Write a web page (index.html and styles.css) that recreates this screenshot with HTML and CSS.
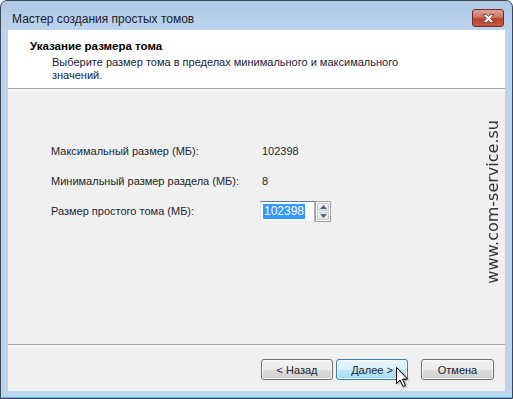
FILE: index.html
```html
<!DOCTYPE html>
<html lang="ru">
<head>
    <meta charset="UTF-8">
    <title>Мастер создания простых томов</title>
    <link rel="stylesheet" href="styles.css">
</head>
<body>
    <div class="window">
        <div class="titlebar">
            <span class="title">Мастер создания простых томов</span>
            <span class="close">
                <svg width="15" height="11" viewBox="0 0 15 11">
                    <path d="M2 1.5 L5.5 1.5 L7.5 3.5 L9.5 1.5 L13 1.5 L9.5 5.5 L13 9.5 L9.5 9.5 L7.5 7.5 L5.5 9.5 L2 9.5 L5.5 5.5 Z" fill="#fff" stroke="#7a4a4a" stroke-width="1"/>
                </svg>
            </span>
        </div>
        <div class="client">
            <div class="header">
                <div class="heading">Указание размера тома</div>
                <div class="subtitle">Выберите размер тома в пределах минимального и максимального<br>значений.</div>
            </div>
            <div class="content">
                <div class="row">
                    <span class="label">Максимальный размер (МБ):</span>
                    <span class="value">102398</span>
                </div>
                <div class="row">
                    <span class="label">Минимальный размер раздела (МБ):</span>
                    <span class="value">8</span>
                </div>
                <div class="row">
                    <span class="label">Размер простого тома (МБ):</span>
                    <div class="spinner">
                        <div class="spin-field"><span class="selected">102398</span></div>
                        <div class="spin-buttons">
                            <span class="spin">
                                <svg width="7" height="4" viewBox="0 0 7 4"><path d="M3.5 0 L7 4 L0 4 Z" fill="#4d6185"/></svg>
                            </span>
                            <span class="spin">
                                <svg width="7" height="4" viewBox="0 0 7 4"><path d="M0 0 L7 0 L3.5 4 Z" fill="#4d6185"/></svg>
                            </span>
                        </div>
                    </div>
                </div>
            </div>
            <div class="footer">
                <span class="btn">&lt; Назад</span>
                <span class="btn hot">Далее &gt;</span>
                <span class="btn cancel">Отмена</span>
            </div>
        </div>
        <div class="watermark">www.com-service.su</div>
        <svg class="cursor" width="14" height="22" viewBox="0 0 14 22">
            <path d="M1.5 1.5 L1.5 17.5 L5 14 L8 20.5 L10.5 19.5 L7.5 13 L12.5 13 Z" fill="#fff" stroke="#000" stroke-width="1" stroke-linejoin="miter"/>
        </svg>
    </div>
</body>
</html>
```

FILE: styles.css
```css
body {
    margin: 0;
    background-color: #fff;
    font-family: 'Liberation Sans', Arial, sans-serif;
    font-size: 11px;
    color: #000;
}

.window {
    position: relative;
    box-sizing: border-box;
    width: 513px;
    height: 399px;
    border: 1px solid #3a4656;
    border-radius: 7px 7px 0 0;
    background: linear-gradient(to bottom, #aec8e6 0px, #bcd4ee 30px, #bcd4ee 100%);
    box-shadow: inset 0 -1px 0 #4cc3dd;
    display: flex;
    flex-direction: column;
}

.titlebar {
    height: 29px;
    display: flex;
    align-items: flex-start;
    justify-content: space-between;
    padding: 0 8px 0 11px;
}

.title {
    margin-top: 10px;
    line-height: 16px;
    font-size: 12px;
    color: #1b1b2b;
}

.close {
    margin-top: 8px;
    width: 32px;
    height: 18px;
    box-sizing: border-box;
    border: 1px solid #6e2b2b;
    border-radius: 3px;
    background: linear-gradient(to bottom, #e0a396 0%, #cf7261 45%, #b9402c 55%, #c75a3f 100%);
    display: flex;
    align-items: center;
    justify-content: center;
}

.client {
    margin: 0 7px;
    height: 361px;
    background-color: #f0f0f0;
    display: flex;
    flex-direction: column;
    white-space: nowrap;
}

.header {
    background-color: #fff;
    border-bottom: 1px solid #a0a0a0;
    padding: 9px 0 0 22px;
    box-sizing: border-box;
    height: 59px;
}

.heading {
    font-weight: bold;
    font-size: 11.5px;
    line-height: 15px;
}

.subtitle {
    margin: 2px 0 0 22px;
    line-height: 13px;
    color: #1a1a3a;
}

.content {
    flex: 1;
    border-top: 1px solid #fff;
    padding: 46px 0 0 43px;
    color: #1e1e2e;
}

.row {
    height: 30px;
    display: flex;
    align-items: center;
}

.label {
    width: 211px;
}

.spinner {
    display: flex;
    margin-left: -2px;
}

.spin-field {
    width: 55px;
    height: 21px;
    box-sizing: border-box;
    border: 1px solid #abadb3;
    border-left-color: #e2e3ea;
    border-bottom-color: #e3e9ef;
    border-top-color: #5b7a9c;
    background-color: #fff;
    padding: 2px 2px;
}

.selected {
    display: inline-block;
    background-color: #3399ff;
    color: #fff;
    font-size: 12px;
    line-height: 15px;
    padding: 0 1px;
}

.spin-buttons {
    width: 16px;
    height: 21px;
    box-sizing: border-box;
    border: 1px solid #a0a0a0;
    padding: 1px;
    display: flex;
    flex-direction: column;
    gap: 1px;
    background-color: #fff;
}

.spin {
    flex: 1;
    border: 1px solid #c8c8c8;
    background: linear-gradient(to bottom, #f4f4f4, #e2e2e2);
    display: flex;
    align-items: center;
    justify-content: center;
}

.footer {
    height: 47px;
    box-sizing: border-box;
    border-top: 1px solid #a0a0a0;
    box-shadow: inset 0 1px 0 #fff;
    padding: 14px 11px 0 0;
    display: flex;
    justify-content: flex-end;
    align-items: flex-start;
}

.btn {
    width: 72px;
    height: 21px;
    box-sizing: border-box;
    border: 1px solid #707070;
    border-radius: 3px;
    background: linear-gradient(to bottom, #f2f2f2 0%, #ebebeb 50%, #dddddd 51%, #cfcfcf 100%);
    box-shadow: inset 0 0 0 1px rgba(255, 255, 255, 0.7);
    display: flex;
    align-items: center;
    justify-content: center;
    color: #1e1e2e;
}

.btn.hot {
    margin-left: 3px;
    border-color: #3c7fb1;
    background: linear-gradient(to bottom, #eaf6fd 0%, #d9f0fc 50%, #bee6fd 51%, #a7d9f5 100%);
}

.btn.cancel {
    width: 73px;
    margin-left: 13px;
}

.watermark {
    position: absolute;
    left: 484px;
    top: 119px;
    writing-mode: vertical-rl;
    transform: rotate(180deg);
    font-family: 'DejaVu Sans', sans-serif;
    font-size: 16px;
    line-height: 16px;
    color: #333;
}

.cursor {
    position: absolute;
    left: 394px;
    top: 365px;
    filter: drop-shadow(1px 1px 1px rgba(0, 0, 0, 0.35));
}
```
